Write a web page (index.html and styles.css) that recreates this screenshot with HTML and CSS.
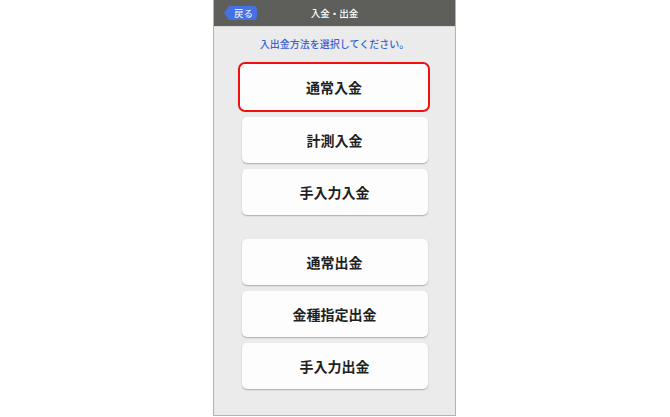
FILE: index.html
```html
<!DOCTYPE html>
<html lang="ja">
<head>
<meta charset="utf-8">
<link rel="stylesheet" href="styles.css">
</head>
<body>
<div class="frame">
  <div class="header">
    <div class="left"><span class="back">戻る</span></div>
    <div class="title">入金・出金</div>
    <div></div>
  </div>
  <div class="content">
    <p class="lead">入出金方法を選択してください。</p>
    <div class="btn selected">通常入金</div>
    <div class="btn g1">計測入金</div>
    <div class="btn g1">手入力入金</div>
    <div class="btn g2">通常出金</div>
    <div class="btn g1">金種指定出金</div>
    <div class="btn g1">手入力出金</div>
  </div>
</div>
</body>
</html>
```
FILE: styles.css
```css
html, body {
  margin: 0;
  padding: 0;
  background: #ffffff;
}
body {
  width: 670px;
  height: 417px;
  overflow: hidden;
  font-family: "Noto Sans CJK JP", "Noto Sans", sans-serif;
}
.frame {
  margin-left: 213px;
  width: 241px;
  height: 415px;
  border: 1px solid #b3b3b3;
  border-top: none;
  background: #ebebeb;
  display: flex;
  flex-direction: column;
}
.header {
  height: 27px;
  background: #5e5f5b;
  border-bottom: 1px solid #d8d8d8;
  display: grid;
  grid-template-columns: 1fr auto 1fr;
  align-items: center;
  box-sizing: border-box;
  flex: none;
}
.left {
  padding-left: 15px;
  display: flex;
  align-items: center;
}
.back {
  position: relative;
  display: flex;
  align-items: center;
  justify-content: center;
  width: 28px;
  height: 14px;
  background: #4671e2;
  border-radius: 0 4px 4px 0;
  color: #ffffff;
  font-size: 9.5px;
  line-height: 14px;
  padding-left: 1px;
  box-sizing: border-box;
}
.back::before {
  content: "";
  position: absolute;
  left: -5px;
  top: 0;
  border-right: 5px solid #4671e2;
  border-top: 7px solid transparent;
  border-bottom: 7px solid transparent;
}
.title {
  color: #ffffff;
  font-size: 9.5px;
  font-weight: 500;
  line-height: 14px;
}
.content {
  display: flex;
  flex-direction: column;
  align-items: center;
}
.lead {
  margin: 10px 0 0;
  color: #3563d6;
  font-size: 10px;
  font-weight: 500;
  line-height: 14px;
  letter-spacing: 0;
}
.btn {
  width: 186px;
  height: 46px;
  background: #fdfdfd;
  border-radius: 5px;
  box-shadow: 0 1px 1.5px rgba(0, 0, 0, 0.28);
  display: flex;
  align-items: center;
  justify-content: center;
  font-size: 14px;
  font-weight: bold;
  color: #1f1f1f;
  box-sizing: border-box;
}
.selected {
  width: 192px;
  height: 50px;
  margin-top: 11px;
  border: 2px solid #f01010;
  border-radius: 7px;
  box-shadow: none;
  margin-left: -1px;
}
.g1 {
  margin-top: 6px;
}
.selected + .g1 {
  margin-top: 5px;
}
.g2 {
  margin-top: 24px;
}
```
